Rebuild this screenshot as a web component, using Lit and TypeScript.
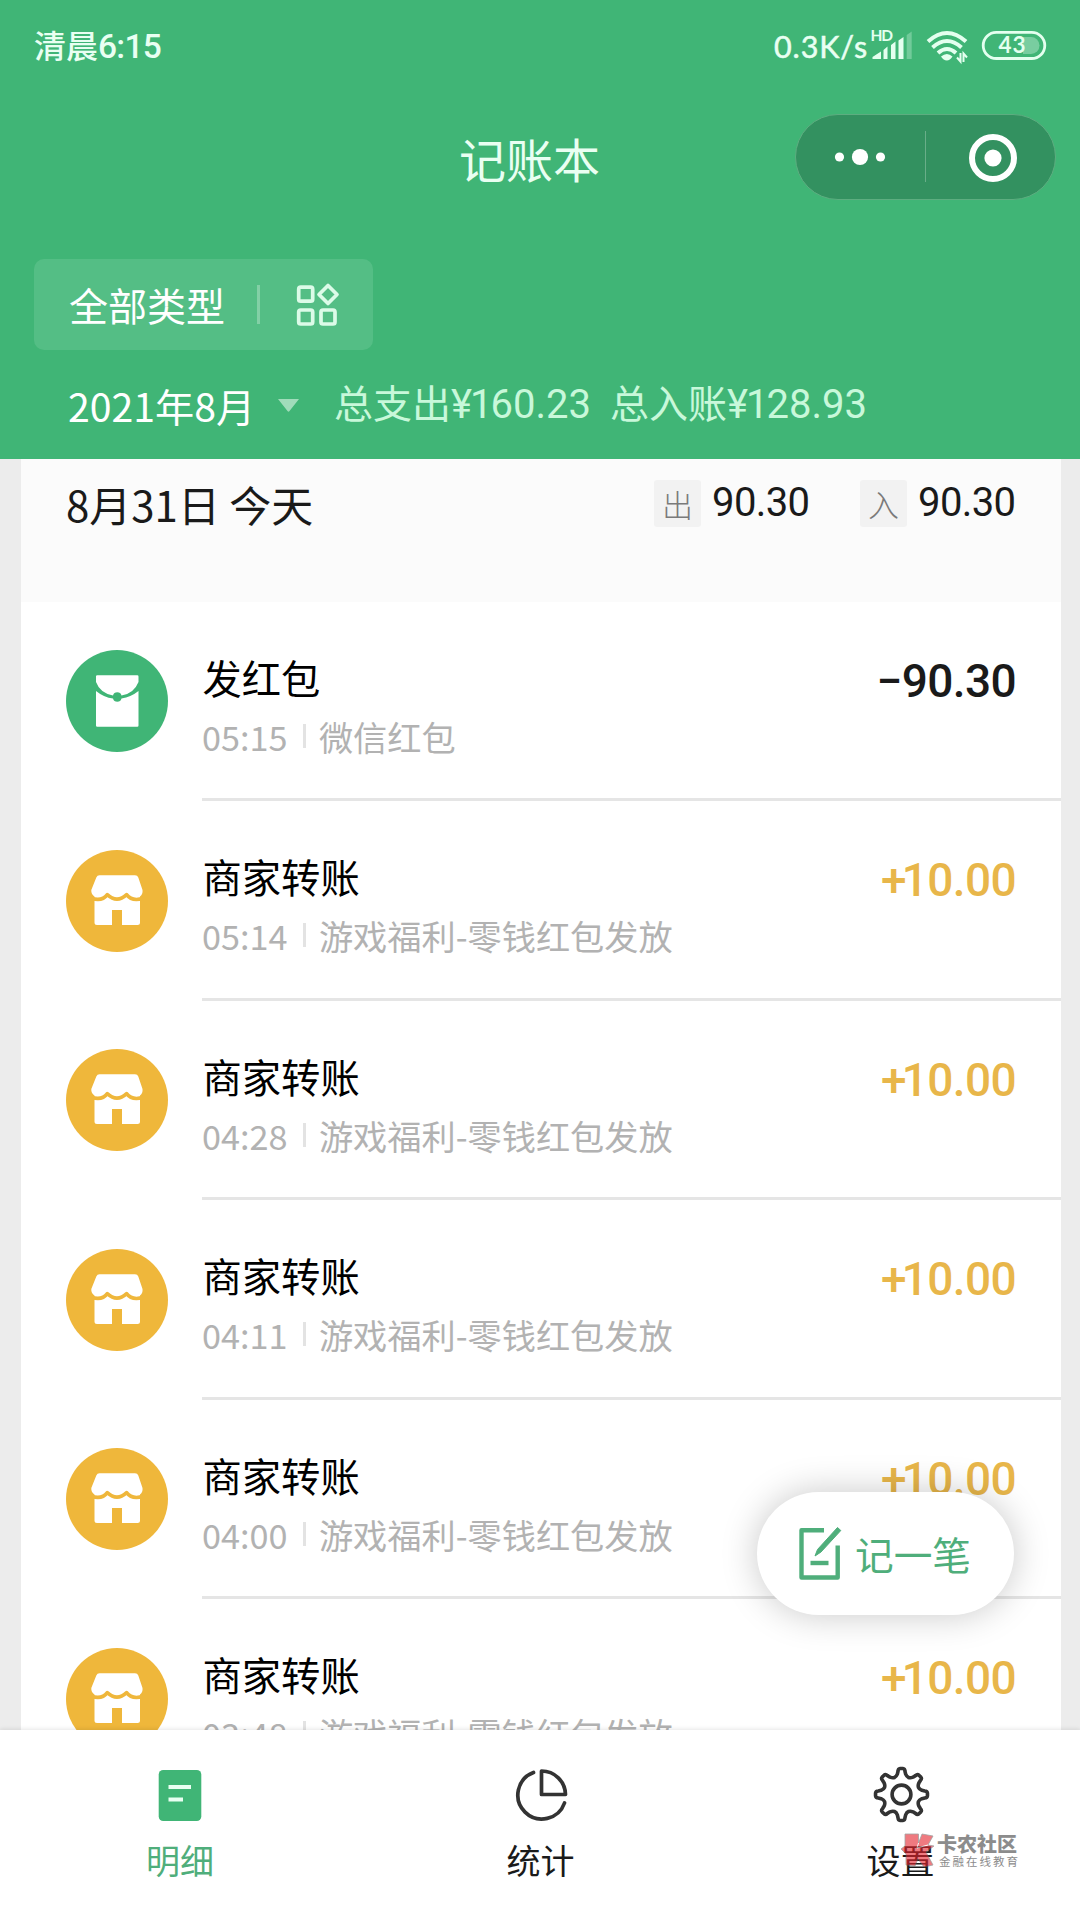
import { LitElement, html, css, svg } from "lit";
import { customElement } from "lit/decorators.js";

interface Entry {
  kind: "packet" | "shop";
  title: string;
  time: string;
  note: string;
  sign: string;
  value: string;
}

const entries: Entry[] = [
  { kind: "packet", title: "发红包", time: "05:15", note: "微信红包", sign: "−", value: "90.30" },
  ...["05:14", "04:28", "04:11", "04:00", "03:48"].map(
    (time): Entry => ({ kind: "shop", title: "商家转账", time, note: "游戏福利-零钱红包发放", sign: "+", value: "10.00" })
  ),
];

// Outline of an eight-toothed cog centred on 0,0
function cogPath(): string {
  const p = (r: number, deg: number) => {
    const a = (deg * Math.PI) / 180;
    return `${(r * Math.sin(a)).toFixed(2)} ${(-r * Math.cos(a)).toFixed(2)}`;
  };
  let d = "";
  for (let i = 0; i < 8; i++) {
    const t = i * 45;
    d += `${i ? "L" : "M"}${p(23.5, t - 8.5)}Q${p(26, t - 7.5)} ${p(26, t - 3)}L${p(26, t + 3)}Q${p(26, t + 7.5)} ${p(23.5, t + 8.5)}`;
    d += `L${p(20.8, t + 11.5)}Q${p(16.4, t + 22.5)} ${p(20.8, t + 33.5)}`;
  }
  return d + "Z";
}

const packetIcon = svg`
  <circle cx="51" cy="51" r="51" fill="#40b576"/>
  <path d="M30 41Q38 47.500 47 48.500A4.400 4.400 0 0 0 55.500 48.500Q65 47 72.500 41V75.500Q72.500 76.700 71.300 76.700H31.200Q30 76.700 30 75.500Z" fill="#fff"/>
  <path d="M31.200 25.300H71.300Q72.500 25.300 72.500 26.500V32Q68 43.500 55.500 45.500A4.400 4.400 0 0 0 47 45.500Q34 43 30 32V26.500Q30 25.300 31.200 25.300Z" fill="#fff"/>`;

const shopIcon = svg`
  <circle cx="51" cy="51" r="51" fill="#efb73b"/>
  <path d="M33.500 25.300H69Q71.500 25.300 72.300 27.500L76.500 40Q77 44 74 46.500V72.500Q74 75 71.500 75H56V60H46V75H31Q28.500 75 28.500 72.500V46.500Q25 44 25.300 40L30.300 27.500Q31.200 25.300 33.500 25.300Z" fill="#fff"/>
  <path d="M25.500 48.300Q36 51.800 41.300 44.600Q51 53.600 60.600 44.600Q66 51.800 77 48.300" fill="none" stroke="#efb73b" stroke-width="3.600" stroke-linejoin="round"/>`;

@customElement("app-root")
export class AppRoot extends LitElement {
  static styles = css`
    :host {
      display: flex;
      flex-direction: column;
      position: relative;
      width: 1080px;
      height: 1920px;
      overflow: hidden;
      background: #ececec;
      color: #1a1a1a;
      font-family: "Noto Sans CJK SC", "Noto Sans", sans-serif;
      white-space: nowrap;
    }
    svg { display: block; flex: none; overflow: visible; }
    .num { font-family: Roboto, "Noto Sans CJK SC", sans-serif; }
    .header { flex: none; height: 459px; background: #40b576; color: #e9fff2; }
    .status { display: flex; align-items: center; height: 90px; padding: 0 33px 0 34px; }
    .clock { font-size: 32px; line-height: 40px; font-weight: 500; flex: 1; padding-top: 1px; }
    .clock .num { font-size: 33.500px; letter-spacing: -0.700px; }
    .speed { font-family: Lato, sans-serif; font-size: 30.500px; line-height: 40px; letter-spacing: 0.900px; -webkit-text-stroke: 0.500px #e9fff2; margin-right: 2px; padding-top: 1px; }
    .indicators { width: 177px; height: 40px; font-family: Lato, sans-serif; padding-top: 1px; }
    .nav { display: flex; align-items: center; height: 134px; padding: 0 24px 0 459px; }
    .nav-title { flex: 1; font-size: 47px; line-height: 60px; padding-top: 2px; }
    .capsule { width: 261px; height: 86px; }
    .filter {
      display: flex; align-items: center; width: 339px; height: 91px; margin: 35px 0 0 34px;
      border-radius: 10px; background: #54be85; color: #fff;
    }
    .filter-text { width: 188px; padding: 0 0 2px 35px; font-size: 39px; line-height: 50px; }
    .filter-bar { width: 3px; height: 39px; background: #83d0a6; margin-right: 37px; }
    .summary { display: flex; align-items: center; height: 103px; padding-left: 68px; }
    .month { width: 210px; font-size: 39.200px; line-height: 50px; color: #fff; padding-top: 7px; }
    .caret { width: 21px; margin: 8px 35px 0 0; }
    .totals { display: flex; gap: 19px; font-size: 39px; line-height: 50px; color: #c8f8da; padding-top: 2px; }
    .totals .num { font-size: 40px; }
    .totals .tight { letter-spacing: -2px; }
    .list { flex: 1; min-height: 0; overflow: hidden; margin: 0 19px 0 21px; background: #fff; }
    .day { display: flex; align-items: flex-start; height: 142.500px; background: #fbfbfb; padding: 0 46px 0 45px; box-sizing: border-box; }
    .date { flex: 1; font-size: 42px; line-height: 60px; padding-top: 15px; }
    .tag {
      width: 47px; height: 47px; margin-top: 21px; border-radius: 3px; background: #f2f2f2;
      color: #7a7a7a; font-size: 31px; line-height: 47px; text-align: center; font-weight: 300;
    }
    .sum { font-family: Roboto, sans-serif; font-size: 40px; line-height: 50px; margin: 19px 0 0 11px; width: 97px; letter-spacing: -0.600px; }
    .sum.out { margin-right: 51px; }
    .row { display: flex; height: 199.500px; }
    .badge { width: 102px; height: 102px; margin: 48.500px 34px 0 45px; }
    .body { flex: 1; display: flex; justify-content: space-between; padding: 50px 45px 0 0; border-bottom: 3px solid #e5e5e5; box-sizing: border-box; }
    .title { font-size: 39.300px; line-height: 50px; color: #000; padding-left: 0.500px; }
    .meta { display: flex; align-items: center; margin-top: 12px; font-size: 34.200px; line-height: 44px; color: #b2b2b2; }
    .meta-bar { width: 3px; height: 24px; background: #e3e3e3; margin: 0 13px 0 15.500px; }
    .amount { font-family: Roboto, sans-serif; font-size: 46px; line-height: 50px; font-weight: 500; letter-spacing: -0.600px; padding-top: 4px; }
    .amount.in { color: #e8b64a; }
    .amount.in .sign { letter-spacing: -5px; }
    .tabs {
      flex: none; display: grid; grid-template-columns: 360px 361px 359px; height: 190px;
      background: #fff; box-shadow: 0 -1px 4px rgba(0, 0, 0, 0.1); position: relative;
    }
    .tab { display: flex; flex-direction: column; align-items: center; padding-top: 36px; }
    .tab-label { font-size: 34px; line-height: 44px; margin-top: 16px; }
    .tab-label.active { color: #4fae7b; }
    .fab {
      position: absolute; left: 757px; top: 1492px; width: 257px; height: 123px; box-sizing: border-box;
      display: flex; align-items: center; padding-left: 42px; gap: 13px; border-radius: 62px;
      background: #fff; box-shadow: 0 0 36px rgba(0, 0, 0, 0.22); color: #4fae7b; font-size: 38.700px; line-height: 50px;
    }
    .fab span { padding-bottom: 1px; }
    .mark { position: absolute; left: 900px; top: 1832px; display: flex; gap: 3px; }
    .mark-text { display: flex; flex-direction: column; color: #8c8c8c; }
    .mark-name { font-size: 20px; line-height: 24px; font-weight: 900; }
    .mark-sub { font-size: 11.500px; line-height: 14px; letter-spacing: 2px; margin: -2px 0 0 2px; }
  `;

  private renderIndicators() {
    return html`<svg class="indicators" viewBox="870 26 177 40">
      <g fill="#e4ffef">
        <text x="870.500" y="41.300" font-size="15.500" font-weight="700" textLength="22.500">HD</text>
        <path d="M872.500 59V57Q877 54 881 51.500V59ZM883.500 59V50L887.500 46.500V59ZM891 59V45L895.500 41.500V59ZM898.500 59V40.500L903.500 37V59Z"/>
        <path d="M906.700 59V35L911.700 31.500V59Z" opacity=".3"/>
      </g>
      <g fill="none" stroke="#e4ffef" stroke-width="4">
        <path d="M928 41.500Q947 24.500 966 41.500M932.500 47.500Q947 34.500 961.500 47.500M938 53Q947 45 956 53"/>
      </g>
      <path d="M941 56.500Q947 51.500 952.500 56.500Q950 60.500 946.800 60.500Q943.500 60.500 941 56.500Z" fill="#e4ffef"/>
      <path d="M960.500 53V61.500L957 57.500M963.500 62V53.500L967 57.500" fill="none" stroke="#e4ffef" stroke-width="2"/>
      <path d="M1023 37H1031A8.500 8.500 0 0 1 1031 54H1023Z" fill="#79cda0"/>
      <rect x="983.200" y="32.300" width="61.600" height="26.200" rx="13.100" fill="none" stroke="#e4ffef" stroke-width="2.800"/>
      <text x="998.500" y="53.200" font-size="22.500" font-weight="700" fill="#e4ffef" textLength="27">43</text>
    </svg>`;
  }

  private renderCapsule() {
    return html`<svg class="capsule" viewBox="795 114 261 86">
      <rect x="795.500" y="114.500" width="260" height="85" rx="42.500" fill="#339160" stroke="#5dad80"/>
      <path d="M925.500 131V182" stroke="#69ae89"/>
      <g fill="#fff">
        <circle cx="839.500" cy="157" r="4.600"/><circle cx="860" cy="157" r="8.100"/><circle cx="880.500" cy="157" r="4.600"/>
        <circle cx="993" cy="158" r="8.600"/>
      </g>
      <circle cx="993" cy="158" r="21" fill="none" stroke="#fff" stroke-width="6"/>
    </svg>`;
  }

  private renderEntry(e: Entry) {
    return html`<div class="row">
      <svg class="badge" viewBox="0 0 102 102">${e.kind === "packet" ? packetIcon : shopIcon}</svg>
      <div class="body">
        <div>
          <div class="title">${e.title}</div>
          <div class="meta"><span>${e.time}</span><span class="meta-bar"></span><span>${e.note}</span></div>
        </div>
        <div class="amount ${e.kind === "shop" ? "in" : ""}"><span class="sign">${e.sign}</span>${e.value}</div>
      </div>
    </div>`;
  }

  render() {
    return html`
      <div class="header">
        <div class="status">
          <span class="clock">清晨<span class="num">6:15</span></span>
          <span class="speed">0.3K/s</span>
          ${this.renderIndicators()}
        </div>
        <div class="nav">
          <span class="nav-title">记账本</span>
          ${this.renderCapsule()}
        </div>
        <div class="filter">
          <span class="filter-text">全部类型</span>
          <span class="filter-bar"></span>
          <svg width="42" height="42" viewBox="0 0 42 42" fill="none" stroke="#dcfbe8" stroke-width="3.700" stroke-linejoin="round">
            <rect x="1.700" y="3.200" width="14" height="14" rx="2"/>
            <rect x="1.700" y="26" width="14" height="14" rx="2"/>
            <rect x="24" y="26" width="14" height="14" rx="2"/>
            <path d="M31 1.500L40 10.500L31 19.500L22 10.500Z"/>
          </svg>
        </div>
        <div class="summary">
          <span class="month">2021年8月</span>
          <svg class="caret" height="13" viewBox="0 0 21 13"><path d="M0 0H21L11.500 12Q10.500 13.500 9.500 12Z" fill="#a0dcba"/></svg>
          <div class="totals">
            <span>总支出<span class="num"><span class="tight">¥1</span>60.23</span></span>
            <span>总入账<span class="num"><span class="tight">¥1</span>28.93</span></span>
          </div>
        </div>
      </div>
      <div class="list">
        <div class="day">
          <span class="date">8月31日 今天</span>
          <span class="tag">出</span><span class="sum out">90.30</span>
          <span class="tag">入</span><span class="sum">90.30</span>
        </div>
        ${entries.map((e) => this.renderEntry(e))}
      </div>
      <div class="tabs">
        <div class="tab">
          <svg width="56" height="56" viewBox="0 0 56 56">
            <rect x="6.700" y="4" width="42.600" height="51" rx="4.500" fill="#40b576"/>
            <path d="M16.500 21H39M16.500 33.500H31" stroke="#e9fff2" stroke-width="4.200"/>
          </svg>
          <span class="tab-label active">明细</span>
        </div>
        <div class="tab">
          <svg width="56" height="56" viewBox="0 0 56 56" fill="none" stroke="#333" stroke-width="3.700" stroke-linecap="round" stroke-linejoin="round">
            <path d="M20.500 6.500A24 24 0 1 0 51.500 37"/><path d="M28.500 5A24 24 0 0 1 52.500 28.500H28.500Z"/>
          </svg>
          <span class="tab-label">统计</span>
        </div>
        <div class="tab">
          <svg width="56" height="56" viewBox="-28.500 -28.500 56 56" fill="none" stroke="#333" stroke-width="3.600" stroke-linejoin="round">
            <path d=${cogPath()}/><circle r="9.400"/>
          </svg>
          <span class="tab-label">设置</span>
        </div>
      </div>
      <div class="fab">
        <svg width="43" height="55" viewBox="0 0 43 55" fill="none" stroke="#4fae7b" stroke-width="4.400" stroke-linejoin="round">
          <path d="M25 4.200H2.500V51.500H38.700V19.500"/>
          <path d="M11.500 37H29.500"/>
          <path d="M38.500 1.500L41.800 4.500L22 26L16 30L18.500 23.500Z" fill="#4fae7b" stroke-width="1"/>
        </svg>
        <span>记一笔</span>
      </div>
      <div class="mark">
        <svg width="34" height="36" viewBox="0 0 34 36" opacity=".6">
          <path d="M5 2H18.500V11L22 2L33 4L28 13L34 14L26 20L33 33L24 35L18 27L15 34L6 33V22L1 17L5 14Z" fill="#e6232d" stroke="#666" stroke-width=".8"/>
          <path d="M18.500 11L17 16L28 13" fill="none" stroke="#fff"/>
        </svg>
        <div class="mark-text"><span class="mark-name">卡农社区</span><span class="mark-sub">金融在线教育</span></div>
      </div>
    `;
  }
}
